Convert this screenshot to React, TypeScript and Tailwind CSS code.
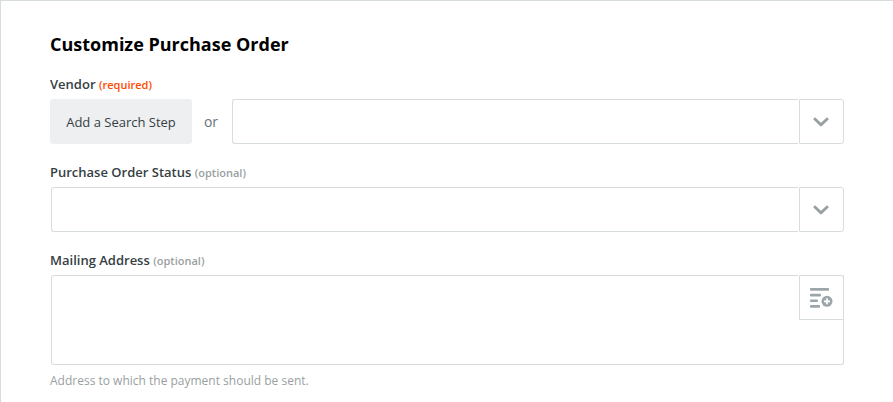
import type { ReactNode } from "react";

function FieldLabel({ title, required }: { title: string; required?: boolean }) {
  return (
    <label className="flex h-5 items-baseline gap-[3.5px] whitespace-nowrap text-[13px] leading-5 font-semibold text-[#354044]">
      {title}
      {required ? (
        <span className="text-[11px] font-semibold text-[#ff4a00]">(required)</span>
      ) : (
        <span className="text-[11px] font-semibold text-[#999fa1]">(optional)</span>
      )}
    </label>
  );
}

function ChevronIcon() {
  return (
    <svg className="mr-px" width="16" height="10" viewBox="0 0 16 10" fill="none">
      <path d="M1.1 1.3L8 7.8L14.9 1.3" stroke="#999fa1" strokeWidth="2.8" />
    </svg>
  );
}

function InsertFieldIcon() {
  return (
    <svg width="23" height="21" viewBox="0 0 23 21" fill="#9ca6aa">
      <rect x="0" y="1" width="19" height="2.8" rx="0.8" />
      <rect x="0" y="6.8" width="11" height="2.8" rx="0.8" />
      <rect x="0" y="12.4" width="8" height="2.6" rx="0.8" />
      <rect x="0" y="18" width="10" height="2.8" rx="0.8" />
      <circle cx="17" cy="14.3" r="5.5" />
      <path d="M17 11.3V17.3M14 14.3H20" stroke="#fff" strokeWidth="1.7" />
    </svg>
  );
}

function SelectBox({ children }: { children?: ReactNode }) {
  return (
    <div className="flex h-[45px] flex-1 gap-px">
      <div className="flex-1 rounded-l-[3px] border border-r-0 border-[#d7dddd]">{children}</div>
      <button
        type="button"
        className="flex w-[45px] items-center justify-center rounded-r-[3px] border border-[#d7dddd]"
      >
        <ChevronIcon />
      </button>
    </div>
  );
}

export default function App() {
  return (
    <div className="h-[402px] w-full overflow-hidden border-t border-l border-[#d7dddf] bg-white pt-[31px] pr-[49px] pl-[49px] font-['Open_Sans',sans-serif]">
      <h2 className="h-6 text-[18px] leading-6 font-bold text-black">Customize Purchase Order</h2>

      {/* Vendor */}
      <div className="mt-[18px]">
        <FieldLabel title="Vendor" required />
        <div className="mt-[5px] flex items-center">
          <button
            type="button"
            className="h-[45px] w-[142px] rounded-[3px] bg-[#eeeff1] pt-[2px] text-[13px] whitespace-nowrap text-[#354044]"
          >
            Add a Search Step
          </button>
          <span className="w-10 pr-[2px] text-center text-[14px] text-[#6b7276]">or</span>
          <SelectBox />
        </div>
      </div>

      {/* Status */}
      <div className="mt-[18px]">
        <FieldLabel title="Purchase Order Status" />
        <div className="mt-[5px] flex pl-px">
          <SelectBox />
        </div>
      </div>

      {/* Mailing address */}
      <div className="mt-[18px]">
        <FieldLabel title="Mailing Address" />
        <div className="mt-[5px] ml-px flex h-[90px]">
          <div className="w-[747px] rounded-l-[3px] border border-r-0 border-[#d7dddd]" />
          <div className="flex flex-1 flex-col rounded-br-[3px] border-r border-b border-[#d7dddd]">
            <button
              type="button"
              className="-mr-px ml-px flex h-[45px] w-[45px] items-center justify-center rounded-tr-[3px] border border-[#d7dddd]"
            >
              <InsertFieldIcon />
            </button>
          </div>
        </div>
        <p className="mt-[7px] text-[12px] leading-[18px] text-[#999fa1]">
          Address to which the payment should be sent.
        </p>
      </div>
    </div>
  );
}
